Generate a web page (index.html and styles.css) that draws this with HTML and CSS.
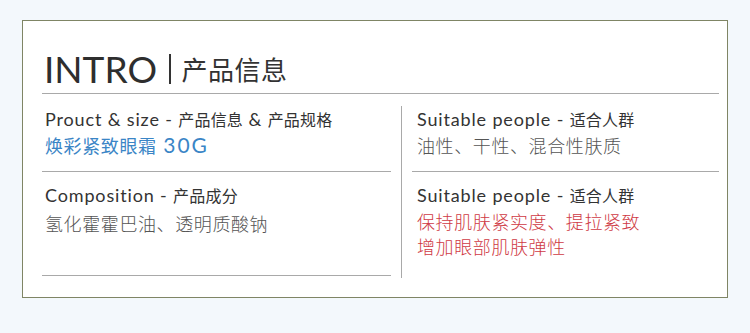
FILE: index.html
```html
<!DOCTYPE html>
<html lang="zh-CN">
<head>
<meta charset="utf-8">
<title>INTRO 产品信息</title>
<link rel="stylesheet" href="styles.css">
</head>
<body>
<div class="card">
  <div class="head">
    <span class="head-en">INTRO</span>
    <span class="head-bar"></span>
    <span class="head-cn">产品信息</span>
  </div>
  <div class="cols">
    <div class="col col-left">
      <div class="item item-top">
        <div class="label">Prouct &amp; size - <span class="cn">产品信息</span> &amp; <span class="cn">产品规格</span></div>
        <div class="value blue">焕彩紧致眼霜 <span class="num">30G</span></div>
      </div>
      <div class="item item-bottom">
        <div class="label">Composition - <span class="cn">产品成分</span></div>
        <div class="value gray">氢化霍霍巴油、透明质酸钠</div>
      </div>
    </div>
    <div class="col col-right">
      <div class="item item-top">
        <div class="label">Suitable people - <span class="cn">适合人群</span></div>
        <div class="value gray">油性、干性、混合性肤质</div>
      </div>
      <div class="item item-bottom no-line">
        <div class="label">Suitable people - <span class="cn">适合人群</span></div>
        <div class="value red">保持肌肤紧实度、提拉紧致<br>增加眼部肌肤弹性</div>
      </div>
    </div>
  </div>
</div>
</body>
</html>
```
FILE: styles.css
```css
* { box-sizing: border-box; }
html, body { margin: 0; padding: 0; }
body {
  background: #f3f8fc;
  font-family: Lato, "Noto Sans CJK SC", sans-serif;
  color: #333;
  width: 750px;
  height: 333px;
  overflow: hidden;
}
.card {
  margin: 20px 0 0 22px;
  width: 706px;
  height: 278px;
  background: #fff;
  border: 1px solid #7f8565;
  padding: 0 8px 0 19px;
}
.head {
  display: flex;
  align-items: center;
  height: 73px;
  padding-top: 24px;
  border-bottom: 1px solid #a9a9a9;
}
.head-en {
  font-size: 37px;
  line-height: 40px;
  letter-spacing: 0;
  color: #2e2e2e;
  padding-left: 2px;
}
.head-bar {
  width: 1.5px;
  height: 30px;
  background: #333;
  margin: 0 11px 0 12px;
}
.head-cn {
  font-family: "Noto Sans CJK SC", sans-serif;
  font-size: 26px;
  line-height: 30px;
  letter-spacing: 0.5px;
  color: #333;
  font-weight: 400;
}
.cols {
  display: flex;
}
.col-left {
  width: 349px;
}
.col-right {
  margin: 12px 0 0 10px;
  width: 318px;
  height: 172px;
  border-left: 1px solid #a9a9a9;
  padding-left: 10px;
}
.item {
  border-bottom: 1px solid #a9a9a9;
  padding-left: 3px;
}
.col-right .item { padding-left: 5px; }
.col-left .item-top { padding-top: 12px; height: 78px; }
.col-right .item-top { padding-top: 0; height: 66px; }
.col-left .item-bottom { padding-top: 10px; height: 104px; }
.col-right .item-bottom { padding-top: 10px; }
.no-line { border-bottom: none; }
.label {
  font-size: 18px;
  line-height: 26px;
  letter-spacing: 0.85px;
  color: #333;
}
.label .cn {
  font-family: "Noto Sans CJK SC", sans-serif;
  font-size: 16px;
  letter-spacing: 0.2px;
}
.value {
  font-family: "Noto Sans CJK SC", sans-serif;
  font-size: 18px;
  line-height: 26px;
  letter-spacing: 0.6px;
}
.col-left .item-bottom .value { margin-top: 2px; }
.value .num {
  font-family: Lato, sans-serif;
  font-size: 21px;
  letter-spacing: 2px;
  margin-left: 2px;
}
.blue { color: #3a85c6; }
.gray { color: #555; font-weight: 300; }
.red { color: #cf3a44; font-weight: 300; line-height: 25px; margin-top: 1px; }
```
